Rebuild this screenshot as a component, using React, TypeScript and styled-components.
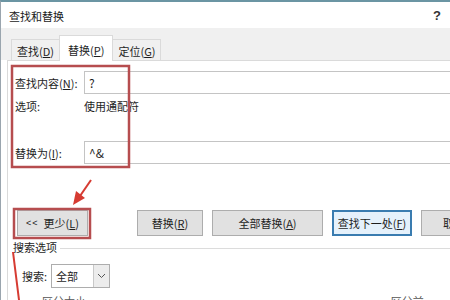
import React from 'react'
import styled, { createGlobalStyle } from 'styled-components'

const GlobalStyle = createGlobalStyle`
  html, body {
    margin: 0;
    padding: 0;
    background: #ffffff;
  }
  body {
    width: 450px;
    height: 300px;
    overflow: hidden;
    font-family: "Noto Sans CJK SC", "Microsoft YaHei", sans-serif;
    font-size: 11px;
    color: #1e1e1e;
  }
`

const Window = styled.div`
  position: relative;
  width: 450px;
  height: 300px;
  box-sizing: border-box;
  border-top: 2px solid #6b95a3;
  border-left: 1px solid #9aa5ae;
  display: flex;
  flex-direction: column;
  overflow: hidden;
  background: #fff;
`

const TitleBar = styled.div`
  height: 25px;
  flex: none;
  display: flex;
  align-items: center;
  justify-content: space-between;
  padding: 1px 9px 0 8px;
`

const Title = styled.span`
  font-size: 11px;
  color: #1a1a1a;
`

const Help = styled.span`
  font-family: "Liberation Sans", sans-serif;
  font-weight: bold;
  font-size: 13px;
  color: #333;
`

const TabStrip = styled.div`
  height: 32px;
  flex: none;
  background: #f0f0f0;
  display: flex;
  align-items: flex-end;
  padding-left: 10px;
`

const Tab = styled.div<{ active?: boolean }>`
  box-sizing: border-box;
  height: ${({ active }) => (active ? '26px' : '21px')};
  padding: 0 ${({ active }) => (active ? '8px' : '5px')};
  display: flex;
  align-items: center;
  border: 1px solid #dadada;
  border-bottom: none;
  background: ${({ active }) => (active ? '#ffffff' : '#f0f0f0')};
  margin-bottom: ${({ active }) => (active ? '-1px' : '0')};
  position: relative;
  z-index: ${({ active }) => (active ? 1 : 0)};
  padding-top: 2px;
  color: #1e1e1e;
  & + & {
    margin-left: -1px;
  }
`

const Panel = styled.div`
  flex: 1;
  margin-left: 6px;
  border-top: 1px solid #dadada;
  border-left: 1px solid #dadada;
  background: #fff;
  padding: 10px 0 0 7px;
  display: flex;
  flex-direction: column;
`

const FieldRow = styled.div<{ gap?: number }>`
  display: flex;
  align-items: center;
  margin-top: ${({ gap }) => gap ?? 0}px;
`

const Label = styled.span`
  width: 69px;
  flex: none;
`

const TextBox = styled.div`
  flex: 1;
  height: 21px;
  border: 1px solid #c4c4c4;
  border-right: none;
  display: flex;
  align-items: center;
  padding-left: 4px;
  font-size: 12px;
`

const OptionRow = styled.div`
  display: flex;
  align-items: center;
  height: 18px;
  margin-top: 3px;
`

const ButtonRow = styled.div`
  display: flex;
  align-items: center;
  margin-top: 46px;
  margin-left: 2px;
  gap: 9px;
`

const Button = styled.div<{ w: number; primary?: boolean; gapLeft?: number }>`
  box-sizing: border-box;
  width: ${({ w }) => w}px;
  height: 26px;
  flex: none;
  display: flex;
  align-items: center;
  justify-content: center;
  background: ${({ primary }) => (primary ? '#e5f1fb' : '#e1e1e1')};
  border: ${({ primary }) => (primary ? '2px solid #3a7cb0' : '1px solid #adadad')};
  margin-left: ${({ gapLeft }) => gapLeft ?? 0}px;
  white-space: nowrap;
  overflow: hidden;
`

const Chevrons = styled.span`
  font-family: "Liberation Sans", sans-serif;
  font-size: 9px;
  margin-right: 5px;
  letter-spacing: 1px;
`

const GroupHeader = styled.div`
  display: flex;
  align-items: center;
  margin-top: 3px;
  margin-left: -2px;
  height: 16px;
`

const GroupLine = styled.div`
  flex: 1;
  height: 1px;
  background: #dcdcdc;
  margin-left: 3px;
  margin-top: 2px;
`

const SearchRow = styled.div`
  display: flex;
  align-items: center;
  margin-top: 9px;
  margin-left: 7px;
`

const Combo = styled.div`
  box-sizing: border-box;
  width: 59px;
  height: 24px;
  margin-left: 4px;
  border: 1px solid #adadad;
  display: flex;
  align-items: stretch;
  background: #fff;
`

const ComboValue = styled.span`
  flex: 1;
  display: flex;
  align-items: center;
  padding-left: 4px;
`

const ComboArrow = styled.span`
  width: 15px;
  border-left: 1px solid #c8c8c8;
  background: #ececec;
  display: flex;
  align-items: center;
  justify-content: center;
`

const CheckRow = styled.div`
  display: flex;
  align-items: center;
  margin-top: 5px;
  margin-left: 12px;
`

const Check = styled.label<{ pushRight?: number }>`
  display: flex;
  align-items: center;
  gap: 3px;
  color: #555;
  margin-left: ${({ pushRight }) => pushRight ?? 0}px;
`

const Box = styled.span`
  width: 11px;
  height: 11px;
  border: 1px solid #777;
  background: #fff;
`

const Annotations = styled.svg`
  position: absolute;
  left: -1px;
  top: -2px;
  pointer-events: none;
`

export default function App() {
  return (
    <>
      <GlobalStyle />
      <Window>
        <TitleBar>
          <Title>查找和替换</Title>
          <Help>?</Help>
        </TitleBar>
        <TabStrip>
          <Tab>查找(<u>D</u>)</Tab>
          <Tab active>替换(<u>P</u>)</Tab>
          <Tab>定位(<u>G</u>)</Tab>
        </TabStrip>
        <Panel>
          <FieldRow>
            <Label>查找内容(<u>N</u>):</Label>
            <TextBox>?</TextBox>
          </FieldRow>
          <OptionRow>
            <Label>选项:</Label>
            <span>使用通配符</span>
          </OptionRow>
          <FieldRow gap={26}>
            <Label>替换为(<u>I</u>):</Label>
            <TextBox>^&amp;</TextBox>
          </FieldRow>
          <ButtonRow>
            <Button w={71}>
              <Chevrons>&lt;&lt;</Chevrons>更少(<u>L</u>)
            </Button>
            <Button w={66} gapLeft={40}>替换(<u>R</u>)</Button>
            <Button w={111}>全部替换(<u>A</u>)</Button>
            <Button w={80} primary>查找下一处(<u>F</u>)</Button>
            <Button w={66}>取消</Button>
          </ButtonRow>
          <GroupHeader>
            <span>搜索选项</span>
            <GroupLine />
          </GroupHeader>
          <SearchRow>
            <span>搜索:</span>
            <Combo>
              <ComboValue>全部</ComboValue>
              <ComboArrow>
                <svg width="9" height="6" viewBox="0 0 9 6">
                  <path d="M1 1 L4.5 4.5 L8 1" fill="none" stroke="#555" strokeWidth="1" />
                </svg>
              </ComboArrow>
            </Combo>
          </SearchRow>
          <CheckRow>
            <Check>
              <Box />
              区分大小写(<u>H</u>)
            </Check>
            <Check pushRight={263}>
              <Box />
              区分前缀(<u>X</u>)
            </Check>
          </CheckRow>
        </Panel>
        <Annotations width="450" height="300" viewBox="0 0 450 300">
          <rect x="12" y="66" width="117" height="101" fill="none" stroke="#b64d4f" strokeWidth="2.5" />
          <rect x="14" y="209" width="76" height="29" fill="none" stroke="#b64d4f" strokeWidth="2.5" />
          <line x1="91" y1="180" x2="80" y2="196" stroke="#d63b32" strokeWidth="2" />
          <polygon points="73,205 76,191 85,198" fill="#d63b32" />
          <line x1="13" y1="252" x2="19" y2="300" stroke="#d63b32" strokeWidth="2" />
        </Annotations>
      </Window>
    </>
  )
}
